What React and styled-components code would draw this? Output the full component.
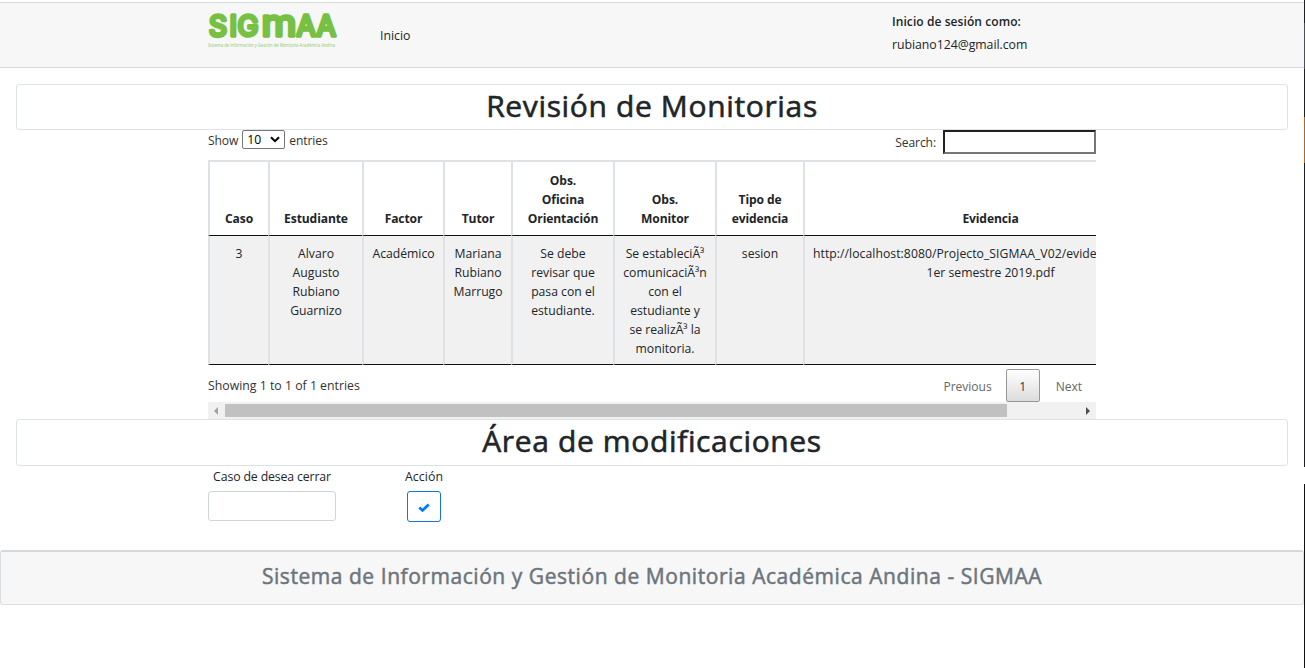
import React from "react";
import styled, { createGlobalStyle } from "styled-components";

const GlobalStyle = createGlobalStyle`
  *, *::before, *::after { box-sizing: border-box; }
  body {
    margin: 0;
    background: #fff;
    color: #212529;
    font-family: "Open Sans", "Noto Sans", sans-serif;
    font-size: 12.3px;
    line-height: 19px;
    overflow: hidden;
  }
`;

const Window = styled.div`
  display: flex;
  height: 668px;
`;

const Page = styled.div`
  flex: 1;
  min-width: 0;
  padding-top: 2px;
`;

const WindowEdge = styled.div`
  width: 1px;
  background: linear-gradient(
    #1d1f24 0 23px, #4a4f5a 23px 69px, #1d1f24 69px 117px, #b5651d 117px 163px,
    #1d1f24 163px 467px, #fff 467px 484px, #111 484px
  );
`;

const Header = styled.header`
  display: flex;
  height: 66px;
  padding-left: 208px;
  background: #f7f7f7;
  border-top: 1px solid #d6dadd;
  border-bottom: 1px solid #d6d6d6;
`;

const Logo = styled.svg`
  display: block;
  width: 130px;
  height: 50px;
  margin-top: 3px;
  overflow: visible;
`;

const NavLink = styled.a`
  width: 471px;
  margin: 23px 0 0 41px;
  padding-left: 1px;
  font-size: 12.3px;
`;

const Session = styled.div`
  margin: 7px 0 0 42px;
  line-height: 23px;
`;

const SessionLabel = styled.div`
  font-weight: 600;
  font-size: 12px;
  letter-spacing: 0.08px;
`;

const SessionUser = styled.div`
  font-size: 12.3px;
  letter-spacing: -0.04px;
`;

const TitleCard = styled.h2`
  display: flex;
  justify-content: center;
  width: 1272px;
  height: ${(p) => p.$height}px;
  margin: ${(p) => p.$top}px 0 0 16px;
  border: 1px solid #dee2e6;
  border-radius: 3px;
  font-size: 30px;
  font-weight: 500;
  line-height: ${(p) => p.$height - 5}px;
  letter-spacing: 0.64px;
  -webkit-text-stroke: 0.6px #212529;
`;

const TableArea = styled.section`
  width: 888px;
  height: 289px;
  margin-left: 208px;
  overflow: hidden;
`;

const Controls = styled.div`
  display: flex;
  justify-content: space-between;
  height: 30px;
  color: #333;
  font-size: 12.1px;
  letter-spacing: -0.1px;
`;

const LengthControl = styled.label`
  display: flex;
  height: 20px;
  align-items: center;
  gap: 4px;
`;

const LengthSelect = styled.span`
  display: flex;
  align-items: center;
  justify-content: space-between;
  width: 43px;
  height: 19px;
  margin-top: -1px;
  padding: 0 4px;
  border: 1px solid #767676;
  border-radius: 2px;
  color: #000;
  font-size: 12.3px;
`;

const SearchControl = styled.label`
  display: flex;
  height: 24px;
  align-items: center;
  gap: 7px;
`;

const SearchInput = styled.input`
  width: 153px;
  height: 24px;
  border: 2px solid;
  border-color: #212121 #767676 #767676 #212121;
  background: #fff;
  outline: none;
`;

const Table = styled.table`
  width: 968px;
  table-layout: fixed;
  border-collapse: separate;
  border-spacing: 0;
  text-align: center;
`;

const HeadCell = styled.th`
  height: 76px;
  padding: 8px 6px 7px;
  border-top: 2px solid #dee2e6;
  border-left: 2px solid #dee2e6;
  border-bottom: 1px solid #111;
  font-size: 12.1px;
  font-weight: 700;
  letter-spacing: -0.12px;
  vertical-align: bottom;
  white-space: pre-line;
`;

const Cell = styled.td`
  height: 129px;
  padding: 8px 0 0;
  border-left: 2px solid #dee2e6;
  border-bottom: 1px solid #111;
  background: #f1f1f1;
  font-size: 12.2px;
  vertical-align: top;
  white-space: pre-line;
`;

const EvidencePath = styled.div`
  padding-left: 8px;
  text-align: left;
  white-space: nowrap;
  letter-spacing: 0.05px;
`;

const TableFooter = styled.div`
  display: flex;
  justify-content: space-between;
  height: 37px;
  color: #333;
`;

const Info = styled.div`
  padding-top: 11px;
`;

const Pager = styled.nav`
  display: flex;
  height: 33px;
  margin-top: 4px;
  align-items: center;
  color: #666;
  font-size: 12.1px;
  letter-spacing: -0.05px;
`;

const PageButton = styled.span`
  padding: 1px 14px 0 16px;
`;

const CurrentPage = styled.span`
  display: flex;
  width: 34px;
  height: 33px;
  align-items: center;
  justify-content: center;
  padding-top: 1px;
  border: 1px solid #979797;
  border-radius: 2px;
  background: linear-gradient(#fff, #dcdcdc);
  color: #333;
`;

const ScrollTrack = styled.div`
  display: flex;
  height: 17px;
  align-items: center;
  background: #f1f1f1;
`;

const ScrollArrow = styled.svg`
  width: 17px;
  height: 17px;
  fill: ${(p) => p.$color};
`;

const ScrollThumb = styled.div`
  width: 782px;
  height: 13px;
  margin-right: 72px;
  background: #c1c1c1;
`;

const Form = styled.form`
  display: flex;
  gap: 64px;
  height: 84px;
  padding: 1px 0 0 208px;
`;

const Field = styled.div`
  display: flex;
  flex-direction: column;
  align-items: center;
  gap: 5px;
  width: ${(p) => p.$width}px;
`;

const Label = styled.label`
  letter-spacing: ${(p) => p.$spacing}px;
`;

const TextInput = styled.input`
  width: 128px;
  height: 30px;
  border: 1px solid #ced4da;
  border-radius: 3px;
  outline: none;
`;

const ConfirmButton = styled.button`
  display: flex;
  align-items: center;
  justify-content: center;
  width: 34px;
  height: 31px;
  padding: 2px 0 0;
  border: 1px solid #1573dc;
  border-radius: 3px;
  background: #fff;
`;

const Footer = styled.footer`
  height: 55px;
  border: 1px solid #dcdfe1;
  border-top: 2px solid #d5d8da;
  border-radius: 3px;
  background: #f7f7f7;
  color: #6c757d;
  font-size: 21px;
  font-weight: 500;
  line-height: 49px;
  letter-spacing: 0.55px;
  text-align: center;
  -webkit-text-stroke: 0.5px #6c757d;
`;

const columns = [
  { width: 60, title: "Caso", value: "3" },
  { width: 94, title: "Estudiante", value: "Alvaro\nAugusto\nRubiano\nGuarnizo" },
  { width: 81, title: "Factor", value: "Académico" },
  { width: 68, title: "Tutor", value: "Mariana\nRubiano\nMarrugo" },
  { width: 102, title: "Obs.\nOficina\nOrientación", value: "Se debe\nrevisar que\npasa con el\nestudiante." },
  {
    width: 102,
    title: "Obs.\nMonitor",
    value: "Se estableciÃ³\ncomunicaciÃ³n\ncon el\nestudiante y\nse realizÃ³ la\nmonitoria.",
  },
  { width: 88, title: "Tipo de\nevidencia", value: "sesion" },
  {
    width: 373,
    title: "Evidencia",
    value: (
      <>
        <EvidencePath>http://localhost:8080/Projecto_SIGMAA_V02/evide</EvidencePath>
        1er semestre 2019.pdf
      </>
    ),
  },
];

export default function App() {
  return (
    <Window>
      <GlobalStyle />
      <Page>
        <Header>
          <Logo viewBox="0 0 130 50" fill="#76c043">
            <text
              y="29.6" fontFamily="Inter" fontSize="28" fontWeight="400"
              stroke="#76c043" strokeWidth="3.6" strokeLinejoin="round"
            >
              <tspan x="1 21.6 29.4">SIG</tspan>
              <tspan x="53.6" fontSize="37" textLength="35" lengthAdjust="spacingAndGlyphs">m</tspan>
              <tspan x="88.6 108.6">AA</tspan>
            </text>
            <text x="0" y="41" fontSize="4.5" textLength="127" lengthAdjust="spacingAndGlyphs" opacity="0.8">
              Sistema de Información y Gestión de Monitoria Académica Andina
            </text>
          </Logo>
          <NavLink>Inicio</NavLink>
          <Session>
            <SessionLabel>Inicio de sesión como:</SessionLabel>
            <SessionUser>rubiano124@gmail.com</SessionUser>
          </Session>
        </Header>

        <TitleCard $top={16} $height={46}>Revisión de Monitorias</TitleCard>

        <TableArea>
          <Controls>
            <LengthControl>
              Show
              <LengthSelect>
                10
                <svg width="10" height="7" viewBox="0 0 10 7">
                  <path d="M1 1.2 5 5.2 9 1.2" fill="none" stroke="#000" strokeWidth="2" />
                </svg>
              </LengthSelect>
              entries
            </LengthControl>
            <SearchControl>
              Search:
              <SearchInput />
            </SearchControl>
          </Controls>
          <Table>
            <colgroup>
              {columns.map((c) => <col key={c.title} width={c.width} />)}
            </colgroup>
            <thead>
              <tr>{columns.map((c) => <HeadCell key={c.title}>{c.title}</HeadCell>)}</tr>
            </thead>
            <tbody>
              <tr>{columns.map((c) => <Cell key={c.title}>{c.value}</Cell>)}</tr>
            </tbody>
          </Table>
          <TableFooter>
            <Info>Showing 1 to 1 of 1 entries</Info>
            <Pager>
              <PageButton>Previous</PageButton>
              <CurrentPage>1</CurrentPage>
              <PageButton>Next</PageButton>
            </Pager>
          </TableFooter>
          <ScrollTrack>
            <ScrollArrow $color="#a3a3a3" viewBox="0 0 17 17"><path d="M10 5v8L6 9z" /></ScrollArrow>
            <ScrollThumb />
            <ScrollArrow $color="#505050" viewBox="0 0 17 17"><path d="M7 5v8l4-4z" /></ScrollArrow>
          </ScrollTrack>
        </TableArea>

        <TitleCard $top={0} $height={47}>Área de modificaciones</TitleCard>

        <Form>
          <Field $width={128}>
            <Label $spacing={-0.14}>Caso de desea cerrar</Label>
            <TextInput />
          </Field>
          <Field $width={48}>
            <Label $spacing={0.1}>Acción</Label>
            <ConfirmButton type="button">
              <svg width="12" height="10" viewBox="0 0 12 10">
                <path d="M1.3 4.4 4.5 7.4 10.7 1.4" fill="none" stroke="#007bff" strokeWidth="2.8" />
              </svg>
            </ConfirmButton>
          </Field>
        </Form>

        <Footer>Sistema de Información y Gestión de Monitoria Académica Andina - SIGMAA</Footer>
      </Page>
      <WindowEdge />
    </Window>
  );
}
